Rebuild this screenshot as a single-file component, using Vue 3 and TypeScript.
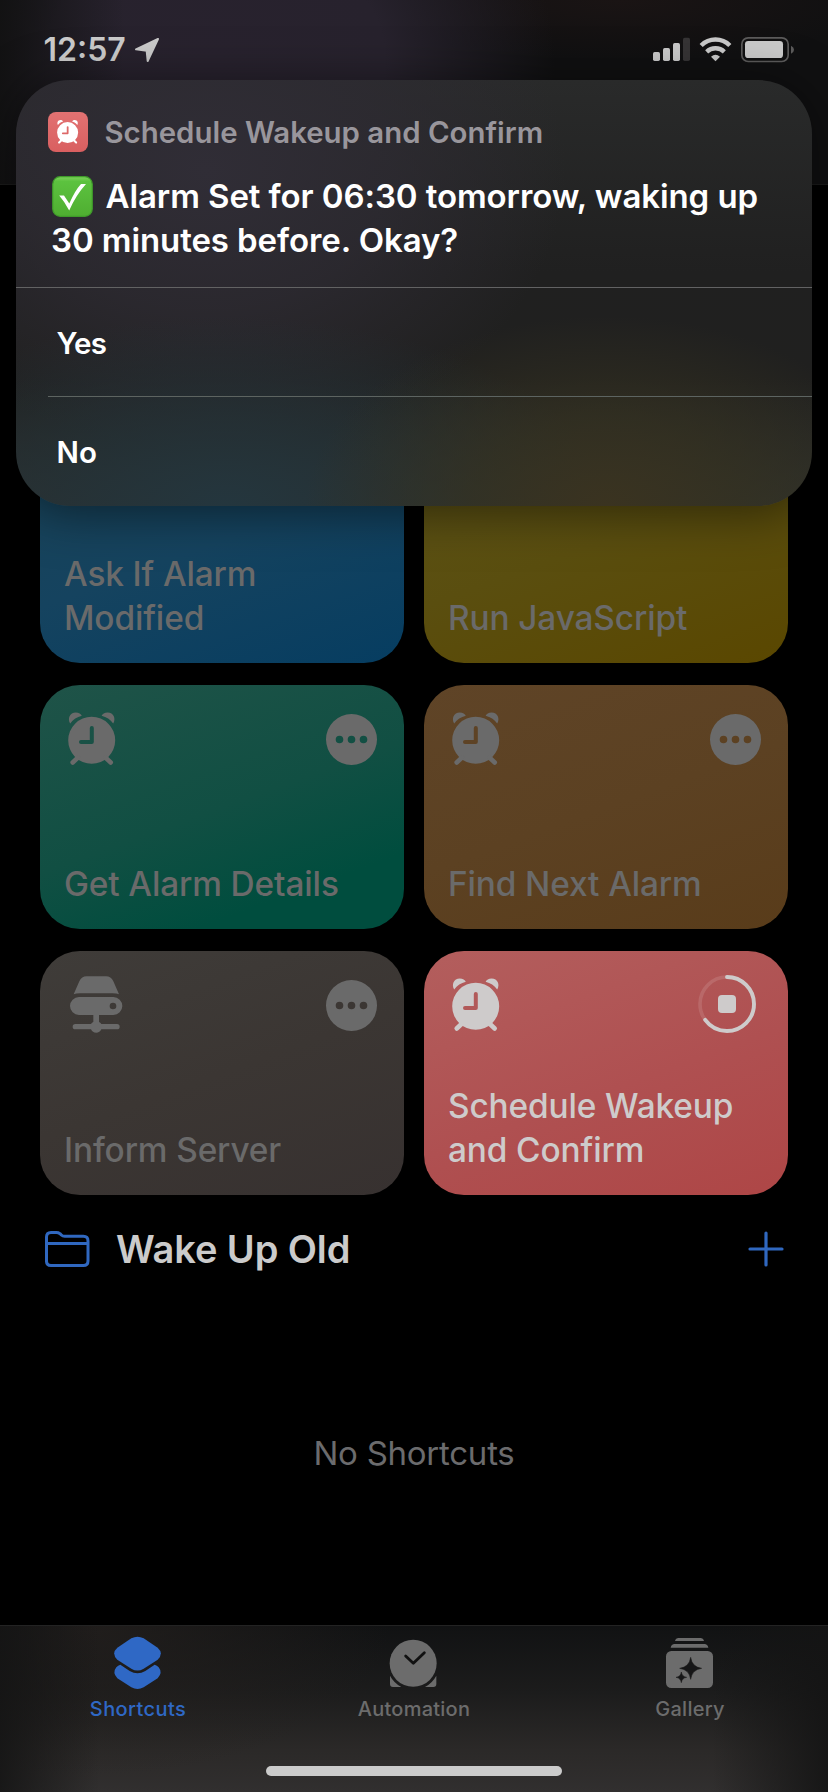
<script setup lang="ts">
type Glyph = 'alarm' | 'server'

interface Shortcut {
  lines: string[]
  tone: string
  glyph: Glyph
  running?: boolean
}

const shortcuts: Shortcut[] = [
  { lines: ['Ask If Alarm', 'Modified'], tone: 'blue', glyph: 'alarm' },
  { lines: ['Run JavaScript'], tone: 'yellow', glyph: 'alarm' },
  { lines: ['Get Alarm Details'], tone: 'green', glyph: 'alarm' },
  { lines: ['Find Next Alarm'], tone: 'orange', glyph: 'alarm' },
  { lines: ['Inform Server'], tone: 'gray', glyph: 'server' },
  { lines: ['Schedule Wakeup', 'and Confirm'], tone: 'red', glyph: 'alarm', running: true },
]

const choices: string[] = ['Yes', 'No']

const alarmFace =
  'M2.2 30.3a23.5 23.5 0 1 0 47 0a23.5 23.5 0 1 0 -47 0ZM23.8 17.9a2 2 0 0 1 4 0V31.9a2 2 0 0 1 -2 2H15a2 2 0 0 1 0 -4H23.8Z'
const alarmBells =
  'M4.2 13.4C1.2 8.8 3.7 2.4 9.8 2.4C12.8 2.4 15 3.8 15.8 5.8C11 7 7 9.7 4.2 13.4ZM47.2 13.4C50.2 8.8 47.7 2.4 41.6 2.4C38.6 2.4 36.4 3.8 35.6 5.8C40.4 7 44.4 9.7 47.2 13.4Z'
</script>

<template>
  <div class="screen">
    <header class="nav">
      <div class="status">
        <div class="clock">
          <span class="time">12:57</span>
          <svg class="location" viewBox="402 111 78 78" aria-hidden="true">
            <path d="M474 117L408 148L440 152L443 183Z" fill="currentColor" stroke="currentColor" stroke-width="6" stroke-linejoin="round" />
          </svg>
        </div>
        <svg class="signals" viewBox="714 105 432 84" aria-hidden="true">
          <rect x="717" y="156" width="21" height="27" rx="5" fill="#cacaca" />
          <rect x="747" y="144" width="21" height="39" rx="5" fill="#cacaca" />
          <rect x="777" y="129" width="21" height="54" rx="5" fill="#cacaca" />
          <rect x="807" y="113" width="21" height="70" rx="5" fill="#363435" />
          <g fill="none" stroke="#cacaca">
            <path d="M861.5 136.500A61 61 0 0 1 947.500 136.500" stroke-width="13.500" />
            <path d="M878 155.500A38 38 0 0 1 931 155.500" stroke-width="13" />
          </g>
          <path d="M891 170Q904.500 158 918 170L904.500 183.500Z" fill="#cacaca" />
          <rect x="983.500" y="113.500" width="139" height="71" rx="19" fill="none" stroke="#5c5b5b" stroke-width="5" />
          <rect x="993" y="123" width="114" height="51" rx="10" fill="#cacaca" />
          <path d="M1131 137Q1140 141 1140 149T1131 161Z" fill="#5c5b5b" />
        </svg>
      </div>
    </header>

    <main class="content">
      <section class="grid">
        <article v-for="item in shortcuts" :key="item.lines[0]" class="card" :class="[item.tone, { running: item.running }]">
          <div class="card-top">
            <svg v-if="item.glyph === 'alarm'" class="alarm" viewBox="0 0 52 58" aria-hidden="true">
              <path :d="alarmFace" fill="currentColor" fill-rule="evenodd" />
              <path :d="alarmBells" fill="currentColor" />
              <path d="M6.700 52.500L12 47.500M44.700 52.500L39.400 47.500" stroke="currentColor" stroke-width="4.600" stroke-linecap="round" />
            </svg>
            <svg v-else class="server" viewBox="144 102 168 180" aria-hidden="true">
              <path d="M161 163L178 124Q185 109 200 109H258Q273 109 280 124L297 163Q290 160 278 160H180Q168 160 161 163Z" fill="currentColor" />
              <path d="M177 171H280A27 27 0 0 1 280 225H177A27 27 0 0 1 177 171ZM269 198a10 10 0 1 0 20 0a10 10 0 1 0 -20 0Z" fill="currentColor" fill-rule="evenodd" />
              <path d="M220 225H237V246A17 17 0 0 1 244 252H291A8 8 0 0 1 291 268H244A17 17 0 0 1 213 268H166A8 8 0 0 1 166 252H213A17 17 0 0 1 220 246Z" fill="currentColor" />
            </svg>
            <svg v-if="item.running" class="progress" viewBox="0 0 58 58" aria-hidden="true">
              <circle cx="29" cy="29" r="27" fill="none" stroke="#fff" stroke-opacity="0.12" stroke-width="3.600" />
              <circle cx="29" cy="29" r="27" fill="none" stroke="currentColor" stroke-width="3.900" stroke-linecap="round" stroke-dasharray="109.800 200" transform="rotate(-90 29 29)" />
              <rect x="20" y="20" width="18" height="18" rx="4" fill="currentColor" />
            </svg>
            <svg v-else class="more" viewBox="0 0 51 51" aria-hidden="true">
              <path d="M0 25.500a25.500 25.500 0 1 0 51 0a25.500 25.500 0 1 0 -51 0ZM9.700 25.500a3.800 3.800 0 1 0 7.600 0a3.800 3.800 0 1 0 -7.600 0ZM21.700 25.500a3.800 3.800 0 1 0 7.600 0a3.800 3.800 0 1 0 -7.600 0ZM33.700 25.500a3.800 3.800 0 1 0 7.600 0a3.800 3.800 0 1 0 -7.600 0Z" fill="currentColor" fill-rule="evenodd" />
            </svg>
          </div>
          <h3 class="card-title"><span v-for="line in item.lines" :key="line">{{ line }}</span></h3>
        </article>
      </section>

      <section class="folder">
        <svg class="folder-icon" viewBox="72 870 141 114" fill="none" stroke="currentColor" stroke-width="9" stroke-linejoin="round" aria-hidden="true">
          <path d="M79.500 966V891Q79.500 877.500 93 877.500H109Q115 877.500 120 881L124 885Q128 889 134 889H190Q204 889 204 903V963Q204 976.500 190 976.500H93Q79.500 976.500 79.500 963ZM80 910.500H203" />
        </svg>
        <h2>Wake Up Old</h2>
        <svg class="plus" viewBox="0 0 36 36" stroke="currentColor" stroke-width="3.200" stroke-linecap="round" aria-hidden="true">
          <path d="M18 2V34M2 18H34" />
        </svg>
      </section>

      <p class="empty">No Shortcuts</p>
    </main>

    <nav class="tabs">
      <div class="tab active">
        <svg viewBox="336 105 156 168" aria-hidden="true">
          <path d="M394 115Q412.500 105 431 115L473 143Q492 160 473 179L431 206Q412.500 217 394 206L352 179Q333 160 352 143Z" fill="currentColor" />
          <path d="M361 194L389 213Q412.500 227 436 213L464 194Q471 196 476 202Q489 218 473 235L431 262Q412.500 272 394 262L352 235Q336 218 349 202Q354 196 361 194Z" fill="currentColor" />
        </svg>
        <span>Shortcuts</span>
      </div>
      <div class="tab automation">
        <svg viewBox="1164 105 156 168" aria-hidden="true">
          <circle cx="1239.500" cy="190" r="70.500" fill="currentColor" />
          <path d="M1170 227Q1181 248 1204 261H1179Q1170 261 1170 252ZM1309 227Q1298 248 1275 261H1300Q1309 261 1309 252Z" fill="currentColor" />
          <path d="M1217 168L1240 190L1273 158" fill="none" stroke="#111" stroke-width="8.500" stroke-linecap="round" stroke-linejoin="round" />
        </svg>
        <span>Automation</span>
      </div>
      <div class="tab gallery">
        <svg viewBox="750 105 156 168" aria-hidden="true">
          <path d="M783 123Q785 114 794 114H859Q868 114 870 123ZM770 143Q772 132 782 132H871Q881 132 883 143Z" fill="currentColor" />
          <rect x="756" y="153" width="141" height="111" rx="16" fill="currentColor" />
          <path d="M830 172Q834 201 863 205Q834 209 830 238Q826 209 797 205Q826 201 830 172ZM802 216Q804 230 818 232Q804 234 802 248Q800 234 786 232Q800 230 802 216Z" fill="#161617" stroke="#161617" stroke-width="1.500" stroke-linejoin="round" />
        </svg>
        <span>Gallery</span>
      </div>
      <div class="home-bar"></div>
    </nav>

    <div class="dialog" role="dialog">
      <div class="dialog-head">
        <div class="app-icon">
          <svg viewBox="0 0 52 58" aria-hidden="true">
            <path :d="alarmFace" fill="currentColor" fill-rule="evenodd" />
            <path :d="alarmBells" fill="currentColor" />
            <path d="M6.700 52.500L12 47.500M44.700 52.500L39.400 47.500" stroke="currentColor" stroke-width="4.600" stroke-linecap="round" />
          </svg>
        </div>
        <span class="app-name">Schedule Wakeup and Confirm</span>
      </div>
      <p class="message">
        <span class="message-line">
          <svg class="check" viewBox="0 0 41 41" aria-hidden="true">
            <defs>
              <linearGradient id="check-fill" x1="0" y1="0" x2="0" y2="1">
                <stop offset="0" stop-color="#7ed35c" />
                <stop offset="0.12" stop-color="#5cc23f" />
                <stop offset="1" stop-color="#4fae31" />
              </linearGradient>
            </defs>
            <rect x="0.700" y="0.700" width="39.600" height="39.600" rx="7.500" fill="url(#check-fill)" stroke="#3f9a2a" stroke-width="1.200" />
            <path d="M7.200 19.500H12L17.300 27.500Q23 14.500 29 8H34Q24 19 17.200 34.500Q12.500 25.500 7.200 19.500Z" fill="#fff" />
          </svg>
          <span>Alarm Set for 06:30 tomorrow, waking up</span>
        </span>
        <span class="message-line">30 minutes before. Okay?</span>
      </p>
      <div class="choices">
        <div v-for="choice in choices" :key="choice" class="choice">{{ choice }}</div>
      </div>
    </div>
  </div>
</template>

<style>
html,
body {
  background: #000;
}
</style>

<style scoped>
.screen {
  position: relative;
  display: flex;
  flex-direction: column;
  width: 828px;
  height: 1792px;
  overflow: hidden;
  background: #000;
  color: #cbcbcb;
  font-family: Inter, "Liberation Sans", sans-serif;
}

.nav {
  flex: none;
  box-sizing: border-box;
  height: 185px;
  border-bottom: 1px solid #1b1b1b;
  background:
    linear-gradient(90deg, rgba(17, 17, 17, 0.9), rgba(17, 17, 17, 0) 15%),
    radial-gradient(ellipse 340px 260px at 215px 60px, #28222e 0%, #27222d 50%, rgba(19, 18, 19, 0) 100%),
    radial-gradient(ellipse 260px 60px at 620px 0, #1a1414, rgba(17, 17, 17, 0)),
    #101011;
}

.status {
  display: flex;
  justify-content: space-between;
  padding: 30px 32px 0 43.500px;
}

.clock {
  display: flex;
}

.time {
  font-size: 32px;
  font-weight: 600;
  line-height: 40px;
}

.location {
  width: 26px;
  height: 26px;
  margin: 7px 0 0 8px;
}

.signals {
  width: 144px;
  height: 28px;
  margin-top: 5px;
}

.content {
  flex: 1;
}

.grid {
  display: grid;
  grid-template-columns: 364px 364px;
  grid-auto-rows: 244px;
  gap: 22px 20px;
  padding: 234px 40px 0;
}

.card {
  box-sizing: border-box;
  display: flex;
  flex-direction: column;
  justify-content: space-between;
  padding: 0 24px 23px;
  border-radius: 40px;
  color: #6a6a6a;
}

.blue { background: linear-gradient(160deg, #1a4357, #15435f 50%, #063d61); }
.yellow { background: linear-gradient(160deg, #5d5418, #5a4e0f 50%, #5a4700); }
.green { background: linear-gradient(160deg, #1f5348, #114f43 50%, #004d3e 80%); }
.orange { background: linear-gradient(160deg, #5f4427, #5c4122 50%, #593c1a); }
.gray { background: linear-gradient(160deg, #3f3c39, #3b3633 50%, #373130); }
.red { background: linear-gradient(160deg, #b35e5d, #af5051 55%, #ae4646); }

.running {
  color: #cecbcb;
}

.card-top {
  display: flex;
  justify-content: space-between;
}

.alarm {
  width: 52px;
  height: 58px;
  margin: 25px 0 0 2px;
}

.server {
  width: 56px;
  height: 60px;
  margin: 23px 0 0 4px;
}

.more {
  width: 51px;
  height: 51px;
  margin: 29px 3px 0 0;
}

.progress {
  width: 58px;
  height: 58px;
  margin: 24px 8px 0 0;
}

.card-title {
  display: flex;
  flex-direction: column;
  margin: 0;
  font-size: 33.400px;
  font-weight: 500;
  line-height: 44px;
  letter-spacing: -0.120px;
  white-space: nowrap;
}

.folder {
  display: flex;
  align-items: center;
  height: 56px;
  padding: 26px 44px 0;
}

.folder-icon {
  width: 47px;
  height: 38px;
  color: #3068c0;
}

.folder h2 {
  flex: 1;
  margin: 0 0 0 25px;
  font-size: 38px;
  font-weight: 600;
  line-height: 56px;
  letter-spacing: -0.100px;
}

.plus {
  width: 36px;
  height: 36px;
  color: #3068c0;
}

.empty {
  margin: 156px 0 0;
  color: #6b6b6d;
  font-size: 33px;
  line-height: 40px;
  letter-spacing: -0.250px;
  text-align: center;
}

.tabs {
  flex: none;
  box-sizing: border-box;
  display: grid;
  grid-template-columns: repeat(3, 1fr);
  grid-template-rows: 140px 10px;
  height: 167px;
  border-top: 1px solid #232323;
  color: #6c6c6c;
  background:
    linear-gradient(90deg, rgba(20, 20, 20, 0.85), rgba(20, 20, 20, 0) 12%, rgba(20, 20, 20, 0) 86%, rgba(20, 20, 20, 0.9)),
    radial-gradient(ellipse 300px 150px at 90px 0, rgba(36, 32, 30, 0.8), rgba(30, 30, 30, 0)),
    linear-gradient(180deg, #111213, #1c1c1c 40%, #2b2928 75%, #312f2f);
}

.tab {
  display: flex;
  flex-direction: column;
  align-items: center;
  gap: 6px;
  padding-top: 9px;
  font-size: 20px;
  font-weight: 500;
  line-height: 24px;
  letter-spacing: 0.250px;
}

.tab svg {
  width: 52px;
  height: 56px;
}

.active {
  color: #2f68c5;
  letter-spacing: 0.400px;
}

.home-bar {
  grid-column: 1 / -1;
  justify-self: center;
  width: 296px;
  height: 10px;
  border-radius: 5px;
  background: #cbcbcb;
}

.dialog {
  position: absolute;
  top: 80px;
  left: 16px;
  box-sizing: border-box;
  width: 796px;
  height: 426px;
  overflow: hidden;
  border-radius: 54px;
  color: #fff;
  background:
    radial-gradient(ellipse 300px 190px at 590px 426px, #3a3320 0%, rgba(54, 50, 32, 0.7) 45%, rgba(34, 34, 32, 0) 100%),
    radial-gradient(ellipse 380px 190px at 210px 426px, #24363e 0%, rgba(36, 50, 56, 0.75) 45%, rgba(34, 36, 38, 0) 100%),
    radial-gradient(ellipse 360px 280px at 190px 90px, #302d36 0%, rgba(46, 43, 51, 0.75) 50%, rgba(34, 34, 35, 0) 100%),
    linear-gradient(180deg, #292a2a, #202020 45%, #20201f 70%, #2d302d);
  box-shadow: 0 6px 50px rgba(0, 0, 0, 0.500);
}

.dialog-head {
  display: flex;
  align-items: center;
  gap: 16.500px;
  height: 40px;
  padding: 32px 32px 0;
}

.app-icon {
  display: grid;
  place-items: center;
  width: 40px;
  height: 40px;
  border-radius: 8px;
  background: linear-gradient(#e27272, #d95f60);
}

.app-icon svg {
  width: 23.500px;
  height: 26px;
}

.app-name {
  padding-top: 2px;
  color: #99969c;
  font-size: 29.400px;
  font-weight: 600;
  line-height: 40px;
}

.message {
  margin: 22px 0 0;
  padding: 0 35px 25px;
  font-size: 33px;
  font-weight: 600;
  line-height: 44px;
  letter-spacing: -0.090px;
  white-space: nowrap;
}

.message-line {
  display: flex;
}

.check {
  width: 41px;
  height: 41px;
  margin: 2px 12.500px 0 1px;
}

.choices {
  border-top: 1px solid #626263;
}

.choice {
  height: 107px;
  padding: 1px 0 0 41px;
  font-size: 29.500px;
  font-weight: 600;
  line-height: 109px;
}

.choice:first-child {
  padding-left: 40.500px;
  letter-spacing: -0.700px;
}

.choice + .choice {
  margin-left: 32px;
  padding-left: 8.500px;
  border-top: 1px solid #5d6461;
}
</style>
